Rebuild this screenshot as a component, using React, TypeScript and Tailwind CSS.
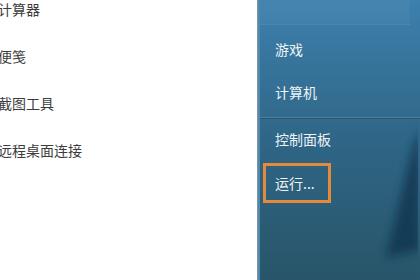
import React from "react";

const font = { fontFamily: '"Noto Sans CJK SC", "Noto Sans", sans-serif' };

export default function App() {
  return (
    <div className="flex w-[420px] h-[280px] overflow-hidden" style={font}>
      <div className="w-[259px] h-full bg-white flex flex-col gap-[27px] mt-[-1px] ml-[-2px] text-[14px] leading-5 text-[#3c3c3c]">
        <div className="h-5">计算器</div>
        <div className="h-5">便笺</div>
        <div className="h-5">截图工具</div>
        <div className="h-5">远程桌面连接</div>
      </div>
      <div className="w-px h-full bg-[#7d939e]" />
      <div className="relative flex-1 h-full border-l-2 border-[#4f89b0] bg-gradient-to-b from-[#3d80ad] via-[#2f6686] to-[#285569] overflow-hidden">
        <div className="absolute left-0 top-0 w-[150px] h-[25px] bg-white/[0.04] border-b border-white/[0.05]" />
        <svg className="absolute inset-0" width="158" height="280" viewBox="0 0 158 280">
          <defs>
            <filter id="b" x="-50%" y="-50%" width="200%" height="200%">
              <feGaussianBlur stdDeviation="4" />
            </filter>
          </defs>
          <polygon points="160,128 152,150 126,258 160,250" fill="#10304d" opacity="0.75" filter="url(#b)" />
        </svg>
        <div className="relative flex flex-col pt-[39px] pl-[15px] text-[14px] leading-5 text-[#eef3f6]">
          <div className="h-5">游戏</div>
          <div className="h-5 mt-[23px]">计算机</div>
          <div className="mt-[15px] -ml-[15px] h-[2px] border-t border-[#4f7f99] border-b border-b-[#28546b]" />
          <div className="h-5 mt-[10px]">控制面板</div>
          <div className="mt-[14px] -ml-[12px] w-[68px] h-[40px] border-[3px] border-[#e5893b] flex items-center pl-[9px]">
            <span className="leading-5">运行...</span>
          </div>
        </div>
      </div>
    </div>
  );
}
